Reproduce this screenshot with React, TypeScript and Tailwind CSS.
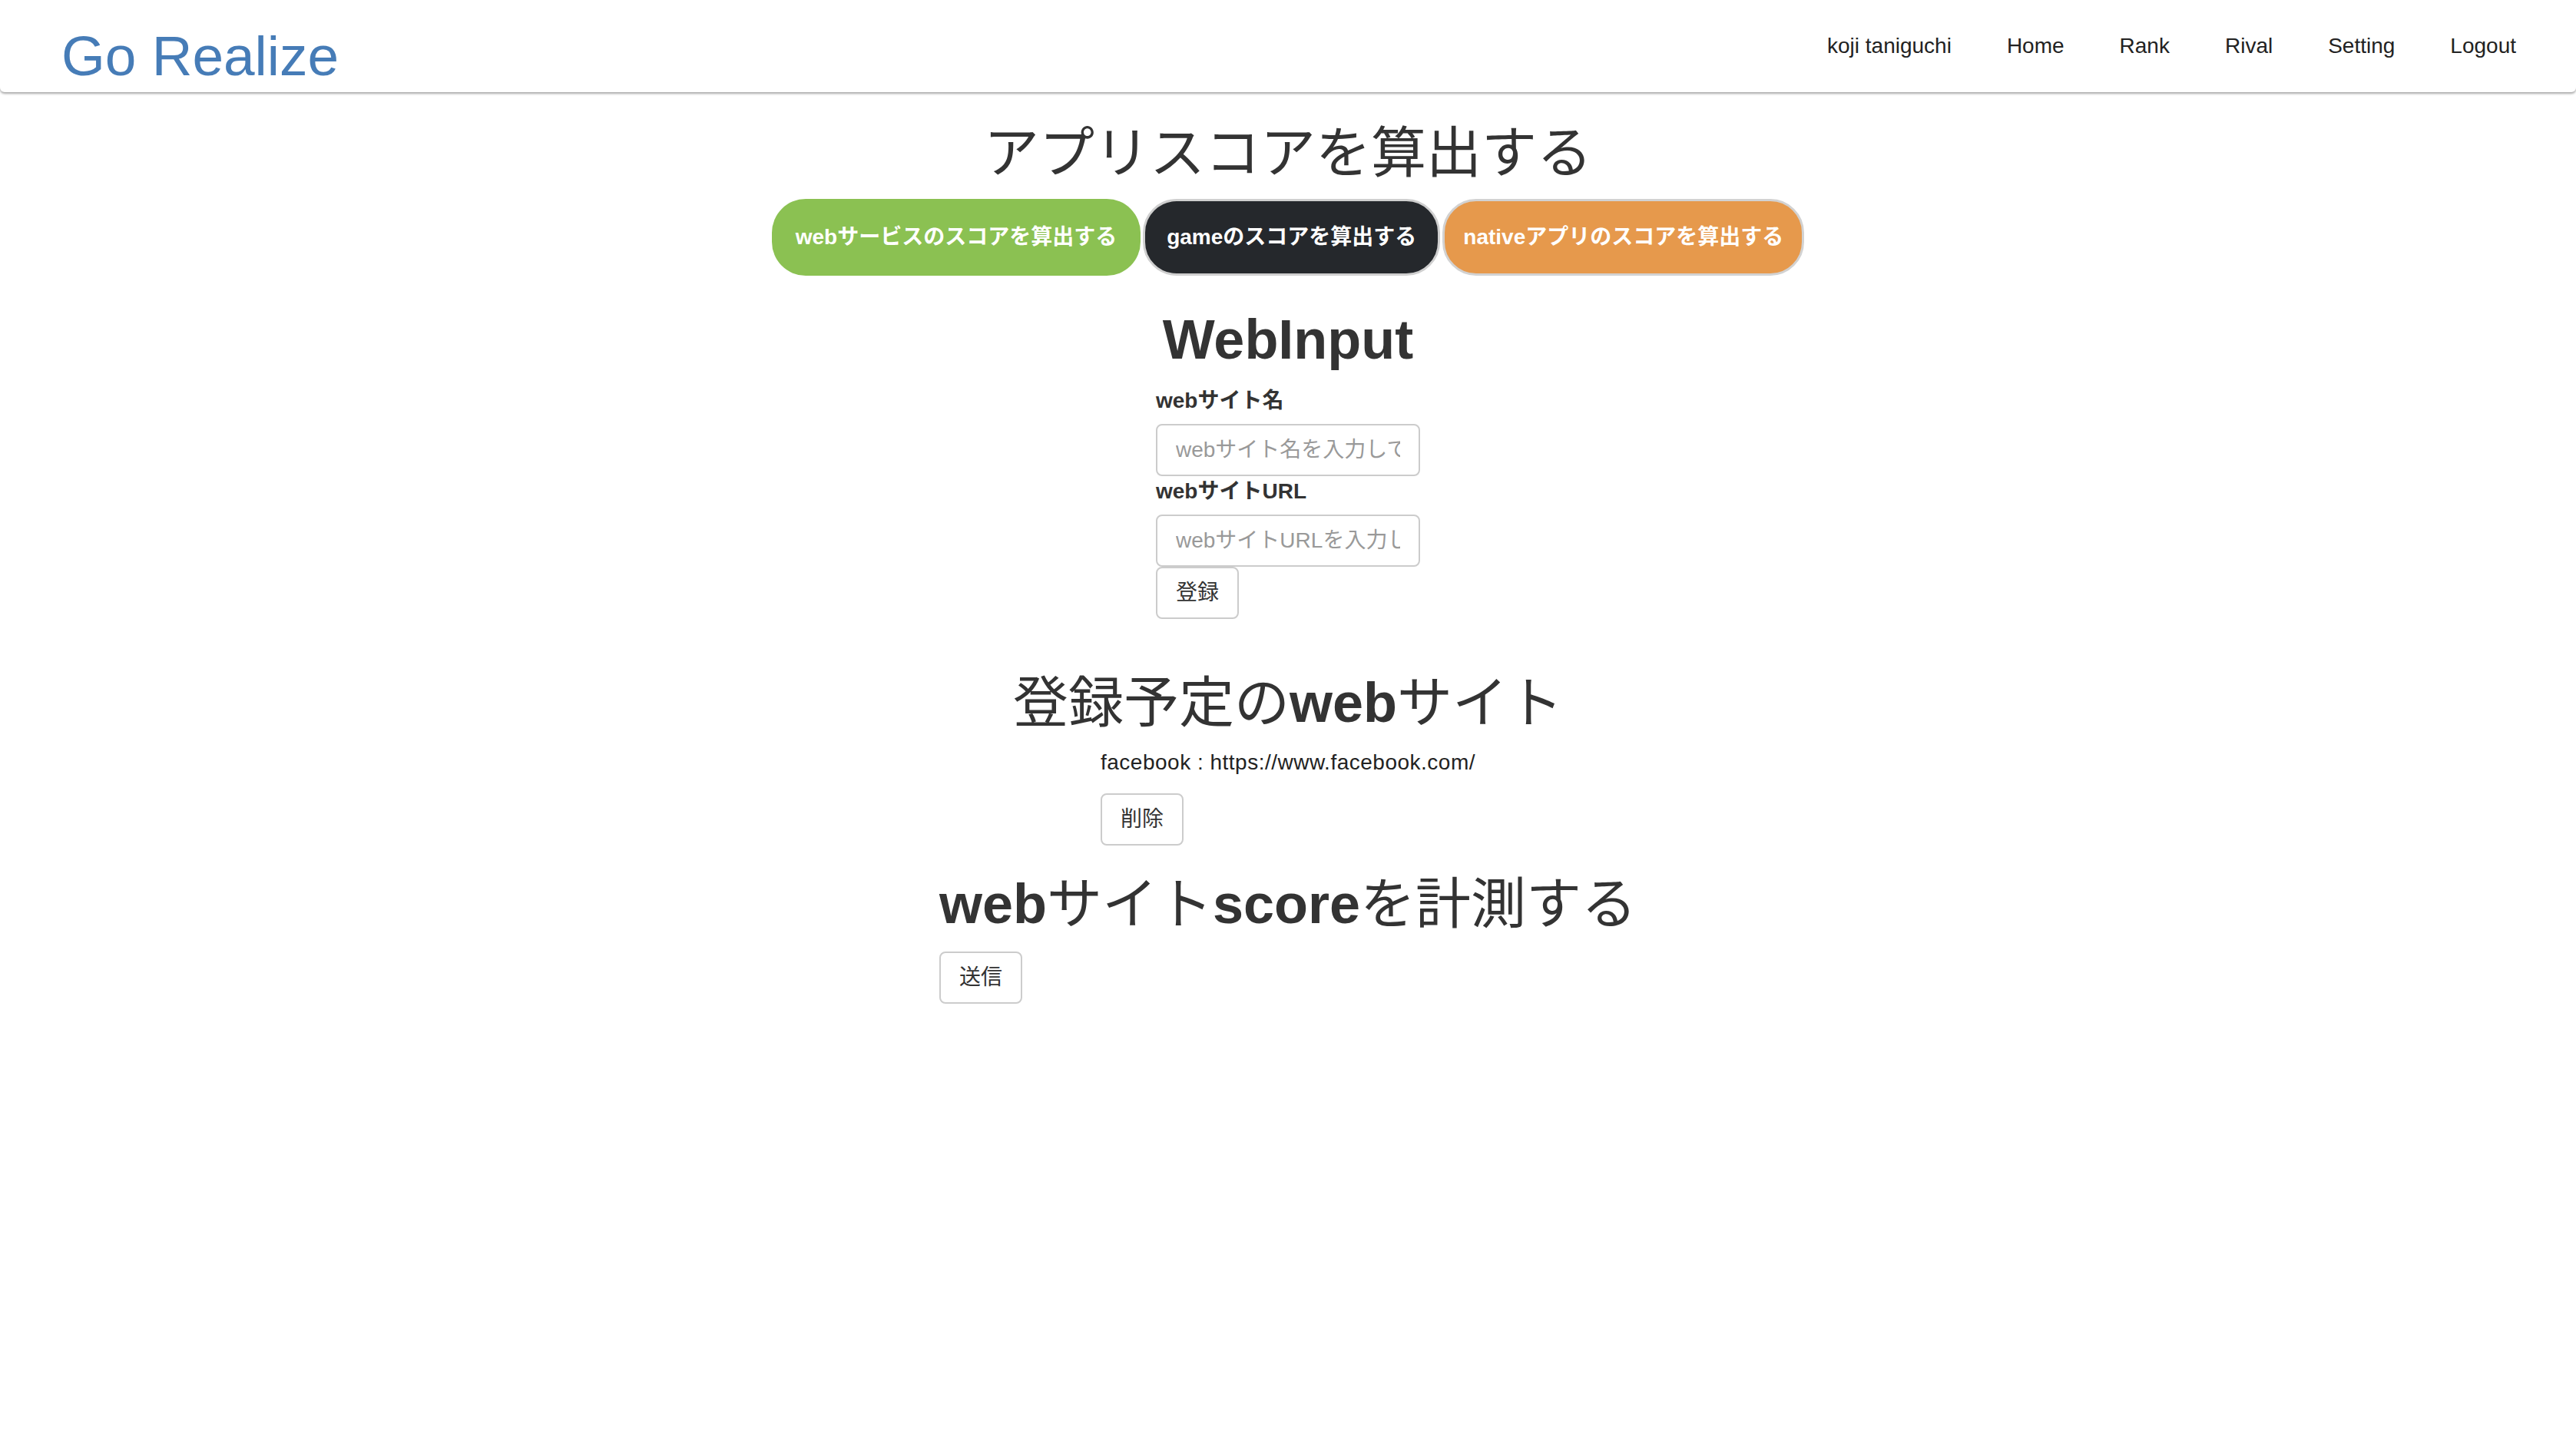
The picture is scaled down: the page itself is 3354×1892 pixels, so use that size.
import React from "react";

const navItems = ["koji taniguchi", "Home", "Rank", "Rival", "Setting", "Logout"];

function SmallButton({ label }: { label: string }) {
  return (
    <button
      type="button"
      className="h-[68px] px-[24px] border-2 border-[#cccccc] rounded-[8px] bg-white text-[28px] leading-[40px] text-[#333333]"
    >
      {label}
    </button>
  );
}

export default function App() {
  return (
    <div className="min-h-screen w-full bg-white text-[#333333] font-['Liberation_Sans','Noto_Sans_CJK_JP',sans-serif]">
      <header className="h-[120px] w-full bg-white rounded-b-[6px] shadow-[0_2px_3px_rgba(0,0,0,0.35)] flex items-start justify-between pl-[80px] pr-[42px]">
        <div className="mt-[37px] text-[73px] leading-[72px] text-[#467cb7]">Go Realize</div>
        <nav className="h-full flex items-center">
          {navItems.map((item) => (
            <a key={item} className="px-[36px] text-[28px] leading-[40px] text-[#222222]">
              {item}
            </a>
          ))}
        </nav>
      </header>

      <main className="flex flex-col items-center">
        <h1 className="mt-[40px] text-[72px] leading-[79px] font-normal text-[#333333]">アプリスコアを算出する</h1>

        <div className="mt-[20px] flex gap-[3px]">
          <button
            type="button"
            className="h-[100px] px-[31px] rounded-[44px] bg-[#8bc152] text-white text-[28px] font-bold"
          >
            webサービスのスコアを算出する
          </button>
          <button
            type="button"
            className="h-[100px] px-[28px] rounded-[44px] border-[3px] border-[#cfcfcf] bg-[#25282c] text-white text-[28px] font-bold"
          >
            gameのスコアを算出する
          </button>
          <button
            type="button"
            className="h-[100px] px-[24px] rounded-[44px] border-[3px] border-[#d2d2d2] bg-[#e6994c] text-white text-[28px] font-bold"
          >
            nativeアプリのスコアを算出する
          </button>
        </div>

        <h1 className="mt-[44px] text-[72px] leading-[79px] font-bold text-[#333333]">WebInput</h1>

        <div className="mt-[20px] w-[344px] flex flex-col items-start">
          <label className="block text-[28px] leading-[40px] font-bold mb-[10px]">webサイト名</label>
          <input
            type="text"
            placeholder="webサイト名を入力してください"
            className="h-[68px] w-full border-2 border-[#cccccc] rounded-[8px] px-[24px] text-[28px] text-[#555555] placeholder:text-[#999999] outline-none"
          />
          <label className="block text-[28px] leading-[40px] font-bold mb-[10px]">webサイトURL</label>
          <input
            type="text"
            placeholder="webサイトURLを入力してください"
            className="h-[68px] w-full border-2 border-[#cccccc] rounded-[8px] px-[24px] text-[28px] text-[#555555] placeholder:text-[#999999] outline-none"
          />
          <SmallButton label="登録" />
        </div>

        <h1 className="mt-[70px] text-[72px] leading-[79px] font-normal text-[#333333]">
          登録予定の<span className="font-bold">web</span>サイト
        </h1>

        <div className="mt-[18px] flex flex-col items-start">
          <p className="text-[28px] leading-[40px] tracking-[0.5px] text-[#222222] mb-[20px]">facebook : https://www.facebook.com/</p>
          <SmallButton label="削除" />
        </div>

        <div className="flex flex-col items-start">
          <h1 className="mt-[37px] mb-[22px] text-[72px] leading-[79px] font-normal text-[#333333]">
            <span className="font-bold">web</span>サイト<span className="font-bold">score</span>を計測する
          </h1>
          <SmallButton label="送信" />
        </div>
      </main>
    </div>
  );
}
